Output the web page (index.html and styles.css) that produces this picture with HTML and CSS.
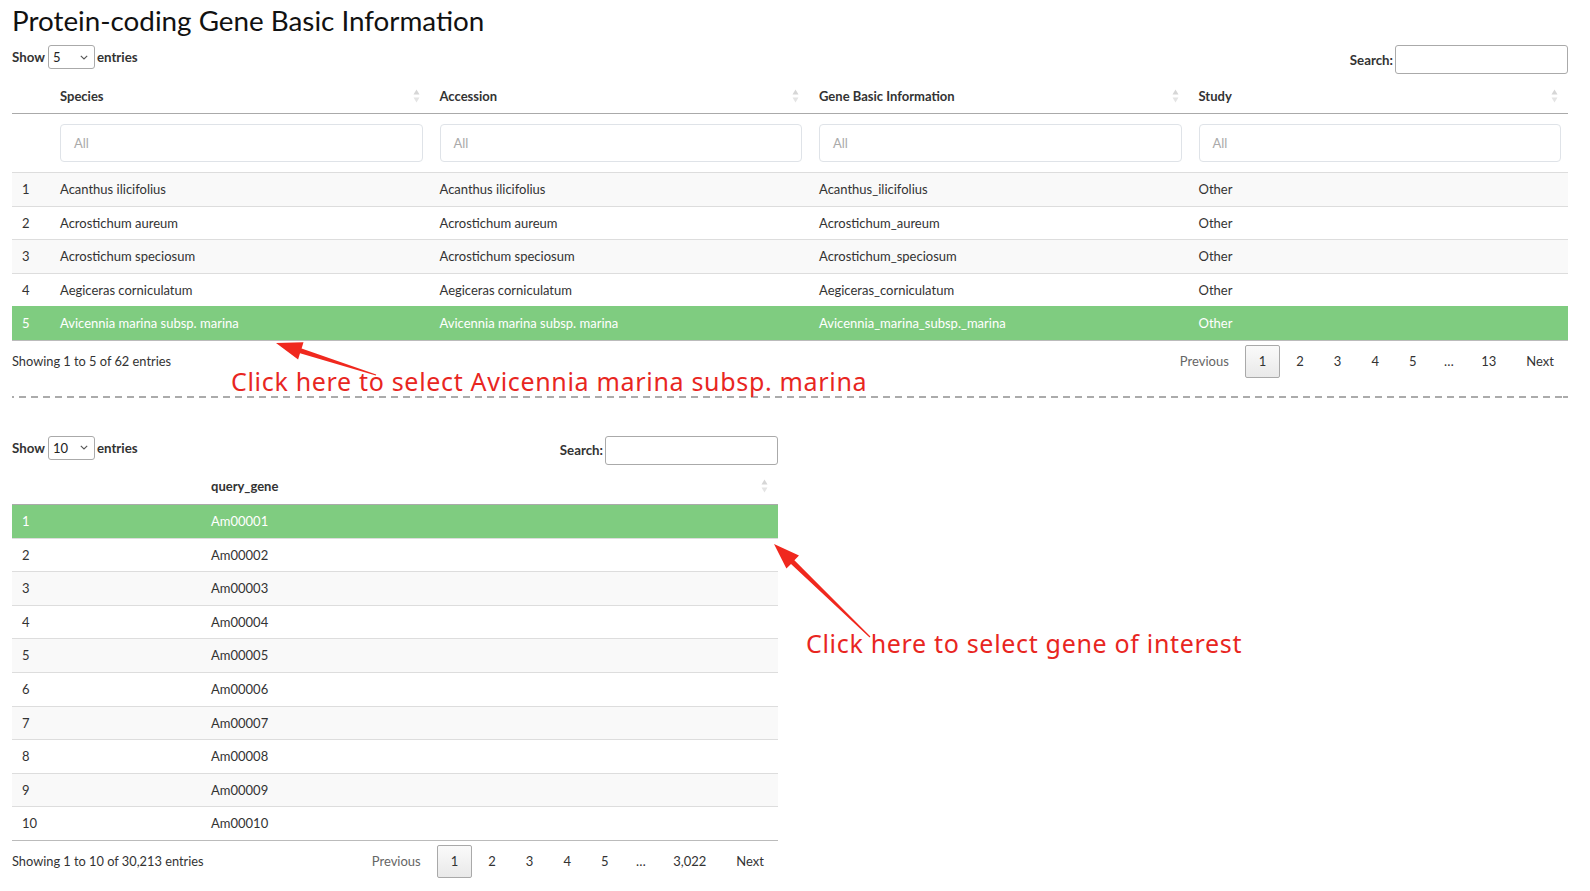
FILE: index.html
```html
<!DOCTYPE html>
<html>
<head>
<meta charset="utf-8">
<title>Protein-coding Gene Basic Information</title>
<link rel="stylesheet" href="styles.css">
</head>
<body>
<div class="page">
  <h1 class="title">Protein-coding Gene Basic Information</h1>

  <section class="dt dt-wide">
    <div class="controls">
      <div class="len">
        <span class="lbl">Show</span>
        <div class="sel"><span>5</span><svg class="chev" width="8" height="5" viewBox="0 0 8 5"><path d="M0.8 0.8 L4 4 L7.2 0.8" fill="none" stroke="#555" stroke-width="1.1"/></svg></div>
        <span class="lbl">entries</span>
      </div>
      <div class="filter">
        <span class="lbl">Search:</span>
        <div class="search"></div>
      </div>
    </div>

    <table class="tbl">
      <colgroup><col class="c-idx"><col><col><col><col></colgroup>
      <thead>
        <tr>
          <th></th>
          <th><div class="th-in"><span>Species</span><svg class="sort" width="7" height="14" viewBox="0 0 7 14"><path d="M3.5 0.5 L6.5 5.5 L0.5 5.5Z" fill="#d6d6d6"/><path d="M3.5 13.5 L6.5 8.5 L0.5 8.5Z" fill="#e4e4e4"/></svg></div></th>
          <th><div class="th-in"><span>Accession</span><svg class="sort" width="7" height="14" viewBox="0 0 7 14"><path d="M3.5 0.5 L6.5 5.5 L0.5 5.5Z" fill="#d6d6d6"/><path d="M3.5 13.5 L6.5 8.5 L0.5 8.5Z" fill="#e4e4e4"/></svg></div></th>
          <th><div class="th-in"><span>Gene Basic Information</span><svg class="sort" width="7" height="14" viewBox="0 0 7 14"><path d="M3.5 0.5 L6.5 5.5 L0.5 5.5Z" fill="#d6d6d6"/><path d="M3.5 13.5 L6.5 8.5 L0.5 8.5Z" fill="#e4e4e4"/></svg></div></th>
          <th><div class="th-in"><span>Study</span><svg class="sort" width="7" height="14" viewBox="0 0 7 14"><path d="M3.5 0.5 L6.5 5.5 L0.5 5.5Z" fill="#d6d6d6"/><path d="M3.5 13.5 L6.5 8.5 L0.5 8.5Z" fill="#e4e4e4"/></svg></div></th>
        </tr>
        <tr class="filters">
          <td></td>
          <td><div class="fin">All</div></td>
          <td><div class="fin">All</div></td>
          <td><div class="fin">All</div></td>
          <td><div class="fin">All</div></td>
        </tr>
      </thead>
      <tbody>
        <tr class="odd"><td>1</td><td>Acanthus ilicifolius</td><td>Acanthus ilicifolius</td><td>Acanthus_ilicifolius</td><td>Other</td></tr>
        <tr><td>2</td><td>Acrostichum aureum</td><td>Acrostichum aureum</td><td>Acrostichum_aureum</td><td>Other</td></tr>
        <tr class="odd"><td>3</td><td>Acrostichum speciosum</td><td>Acrostichum speciosum</td><td>Acrostichum_speciosum</td><td>Other</td></tr>
        <tr><td>4</td><td>Aegiceras corniculatum</td><td>Aegiceras corniculatum</td><td>Aegiceras_corniculatum</td><td>Other</td></tr>
        <tr class="sel-row"><td>5</td><td>Avicennia marina subsp. marina</td><td>Avicennia marina subsp. marina</td><td>Avicennia_marina_subsp._marina</td><td>Other</td></tr>
      </tbody>
    </table>

    <div class="footer">
      <div class="info">Showing 1 to 5 of 62 entries</div>
      <div class="pager">
        <span class="pb dis">Previous</span>
        <span class="pb cur">1</span>
        <span class="pb">2</span>
        <span class="pb">3</span>
        <span class="pb">4</span>
        <span class="pb">5</span>
        <span class="ell">…</span>
        <span class="pb">13</span>
        <span class="pb">Next</span>
      </div>
    </div>
  </section>

  <div class="dash"></div>

  <section class="dt dt-narrow">
    <div class="controls">
      <div class="len">
        <span class="lbl">Show</span>
        <div class="sel"><span>10</span><svg class="chev" width="8" height="5" viewBox="0 0 8 5"><path d="M0.8 0.8 L4 4 L7.2 0.8" fill="none" stroke="#555" stroke-width="1.1"/></svg></div>
        <span class="lbl">entries</span>
      </div>
      <div class="filter">
        <span class="lbl">Search:</span>
        <div class="search"></div>
      </div>
    </div>

    <table class="tbl">
      <colgroup><col class="c-idx2"><col></colgroup>
      <thead>
        <tr>
          <th></th>
          <th><div class="th-in"><span>query_gene</span><svg class="sort" width="7" height="14" viewBox="0 0 7 14"><path d="M3.5 0.5 L6.5 5.5 L0.5 5.5Z" fill="#d6d6d6"/><path d="M3.5 13.5 L6.5 8.5 L0.5 8.5Z" fill="#e4e4e4"/></svg></div></th>
        </tr>
      </thead>
      <tbody>
        <tr class="sel-row"><td>1</td><td>Am00001</td></tr>
        <tr><td>2</td><td>Am00002</td></tr>
        <tr class="odd"><td>3</td><td>Am00003</td></tr>
        <tr><td>4</td><td>Am00004</td></tr>
        <tr class="odd"><td>5</td><td>Am00005</td></tr>
        <tr><td>6</td><td>Am00006</td></tr>
        <tr class="odd"><td>7</td><td>Am00007</td></tr>
        <tr><td>8</td><td>Am00008</td></tr>
        <tr class="odd"><td>9</td><td>Am00009</td></tr>
        <tr><td>10</td><td>Am00010</td></tr>
      </tbody>
    </table>

    <div class="footer">
      <div class="info">Showing 1 to 10 of 30,213 entries</div>
      <div class="pager">
        <span class="pb dis">Previous</span>
        <span class="pb cur">1</span>
        <span class="pb">2</span>
        <span class="pb">3</span>
        <span class="pb">4</span>
        <span class="pb">5</span>
        <span class="ell">…</span>
        <span class="pb">3,022</span>
        <span class="pb">Next</span>
      </div>
    </div>
  </section>

  <div class="note note-1">Click here to select Avicennia marina subsp. marina</div>
  <div class="note note-2">Click here to select gene of interest</div>

  <svg class="arrows" width="1590" height="891" viewBox="0 0 1590 891">
    <polygon fill="#f0281e" points="276,338 303.5,337.3 301.6,343.5 376.2,369.5 375.8,370.5 300.0,348.3 298.1,354.5"/>
    <polygon fill="#f0281e" points="774,539 799.0,550.6 794.4,555.3 870.4,631.6 869.6,632.4 791.0,558.9 786.4,563.6"/>
  </svg>
</div>
</body>
</html>
```

FILE: styles.css
```css
html, body {
  margin: 0;
  padding: 0;
  background: #fff;
}

body {
  font-family: Lato, "Open Sans", sans-serif;
  font-size: 13px;
  color: #333;
}

.page {
  position: relative;
  width: 1556px;
  padding: 0 22px 12px 12px;
}

.title {
  margin: 5px 0 0;
  font-size: 27.8px;
  font-weight: 400;
  line-height: 31px;
  color: #111;
}

.dt-wide {
  margin-top: 9px;
}

.dt-narrow {
  width: 766px;
}

.controls {
  display: flex;
  justify-content: space-between;
  align-items: flex-start;
  height: 29px;
}

.len {
  display: flex;
  align-items: center;
  height: 24px;
}

.filter {
  display: flex;
  align-items: center;
  height: 29px;
}

.lbl {
  font-weight: 700;
  font-size: 13.3px;
  color: #333;
}

.sel {
  box-sizing: border-box;
  width: 47px;
  height: 24px;
  margin: 0 2px 0 3px;
  border: 1px solid #aaa;
  border-radius: 3px;
  display: flex;
  align-items: center;
  justify-content: space-between;
  padding: 0 6px 0 4px;
  color: #222;
  font-size: 13px;
}

.search {
  box-sizing: border-box;
  width: 173px;
  height: 29px;
  margin-left: 2px;
  border: 1px solid #aaa;
  border-radius: 3px;
}

.tbl {
  width: 100%;
  margin-top: 4px;
  border-collapse: collapse;
  table-layout: fixed;
}

.c-idx { width: 38px; }
.c-idx2 { width: 189px; }

.tbl th {
  height: 35px;
  padding: 0 10px;
  text-align: left;
  font-weight: 700;
  border-bottom: 1px solid #aaa;
  color: #333;
}

.th-in {
  display: flex;
  justify-content: space-between;
  align-items: center;
}

.filters td {
  padding: 10px 7px 10px 10px;
  border-bottom: 1px solid #ddd;
}

.fin {
  box-sizing: border-box;
  height: 38px;
  border: 1px solid #dfe3e8;
  border-radius: 4px;
  padding: 0 13px;
  display: flex;
  align-items: center;
  color: #aaa;
  font-size: 13px;
}

.tbl tbody td {
  padding: 7px 10px 6.6px;
  line-height: 19px;
  border-top: 1px solid #ddd;
  white-space: nowrap;
}

.tbl tbody tr:first-child td {
  border-top: none;
}

.tbl tbody tr:last-child td {
  border-bottom: 1px solid #bbb;
}

.tbl tbody tr.odd td {
  background: #f9f9f9;
}

.tbl tbody tr.sel-row td {
  background: #7fcc80;
  color: #fff;
  border-top-color: #7fcc80;
}

.footer {
  display: flex;
  justify-content: space-between;
  align-items: flex-start;
}

.info {
  padding-top: 11px;
  line-height: 18px;
  font-size: 12.8px;
  color: #333;
}

.pager {
  display: flex;
  align-items: center;
  padding-top: 4px;
}

.pb {
  box-sizing: border-box;
  padding: 6.5px 13px;
  line-height: 18px;
  border: 1px solid transparent;
  border-radius: 2px;
  margin-left: 2px;
  color: #333;
}

.pb.dis {
  color: #666;
}

.pb.cur {
  border-color: #a9a9a9;
  background: linear-gradient(to bottom, #fafafa 0%, #e9e9e9 100%);
}

.ell {
  padding: 0 11.5px;
  line-height: 18px;
  margin-left: 2px;
}

.dash {
  height: 2px;
  margin-top: 18px;
  margin-bottom: 38px;
  background: repeating-linear-gradient(to right, #ababab 0 7px, transparent 7px 12px);
  background-position: -5px 0;
}

.note {
  position: absolute;
  font-family: "Noto Sans", "Open Sans", sans-serif;
  font-size: 25px;
  line-height: 25px;
  letter-spacing: 0.68px;
  color: #e8261f;
  white-space: nowrap;
}

.note-1 {
  left: 231px;
  top: 364px;
}

.note-2 {
  left: 806px;
  top: 626px;
}

.arrows {
  position: absolute;
  left: 0;
  top: 0;
  pointer-events: none;
}
```
